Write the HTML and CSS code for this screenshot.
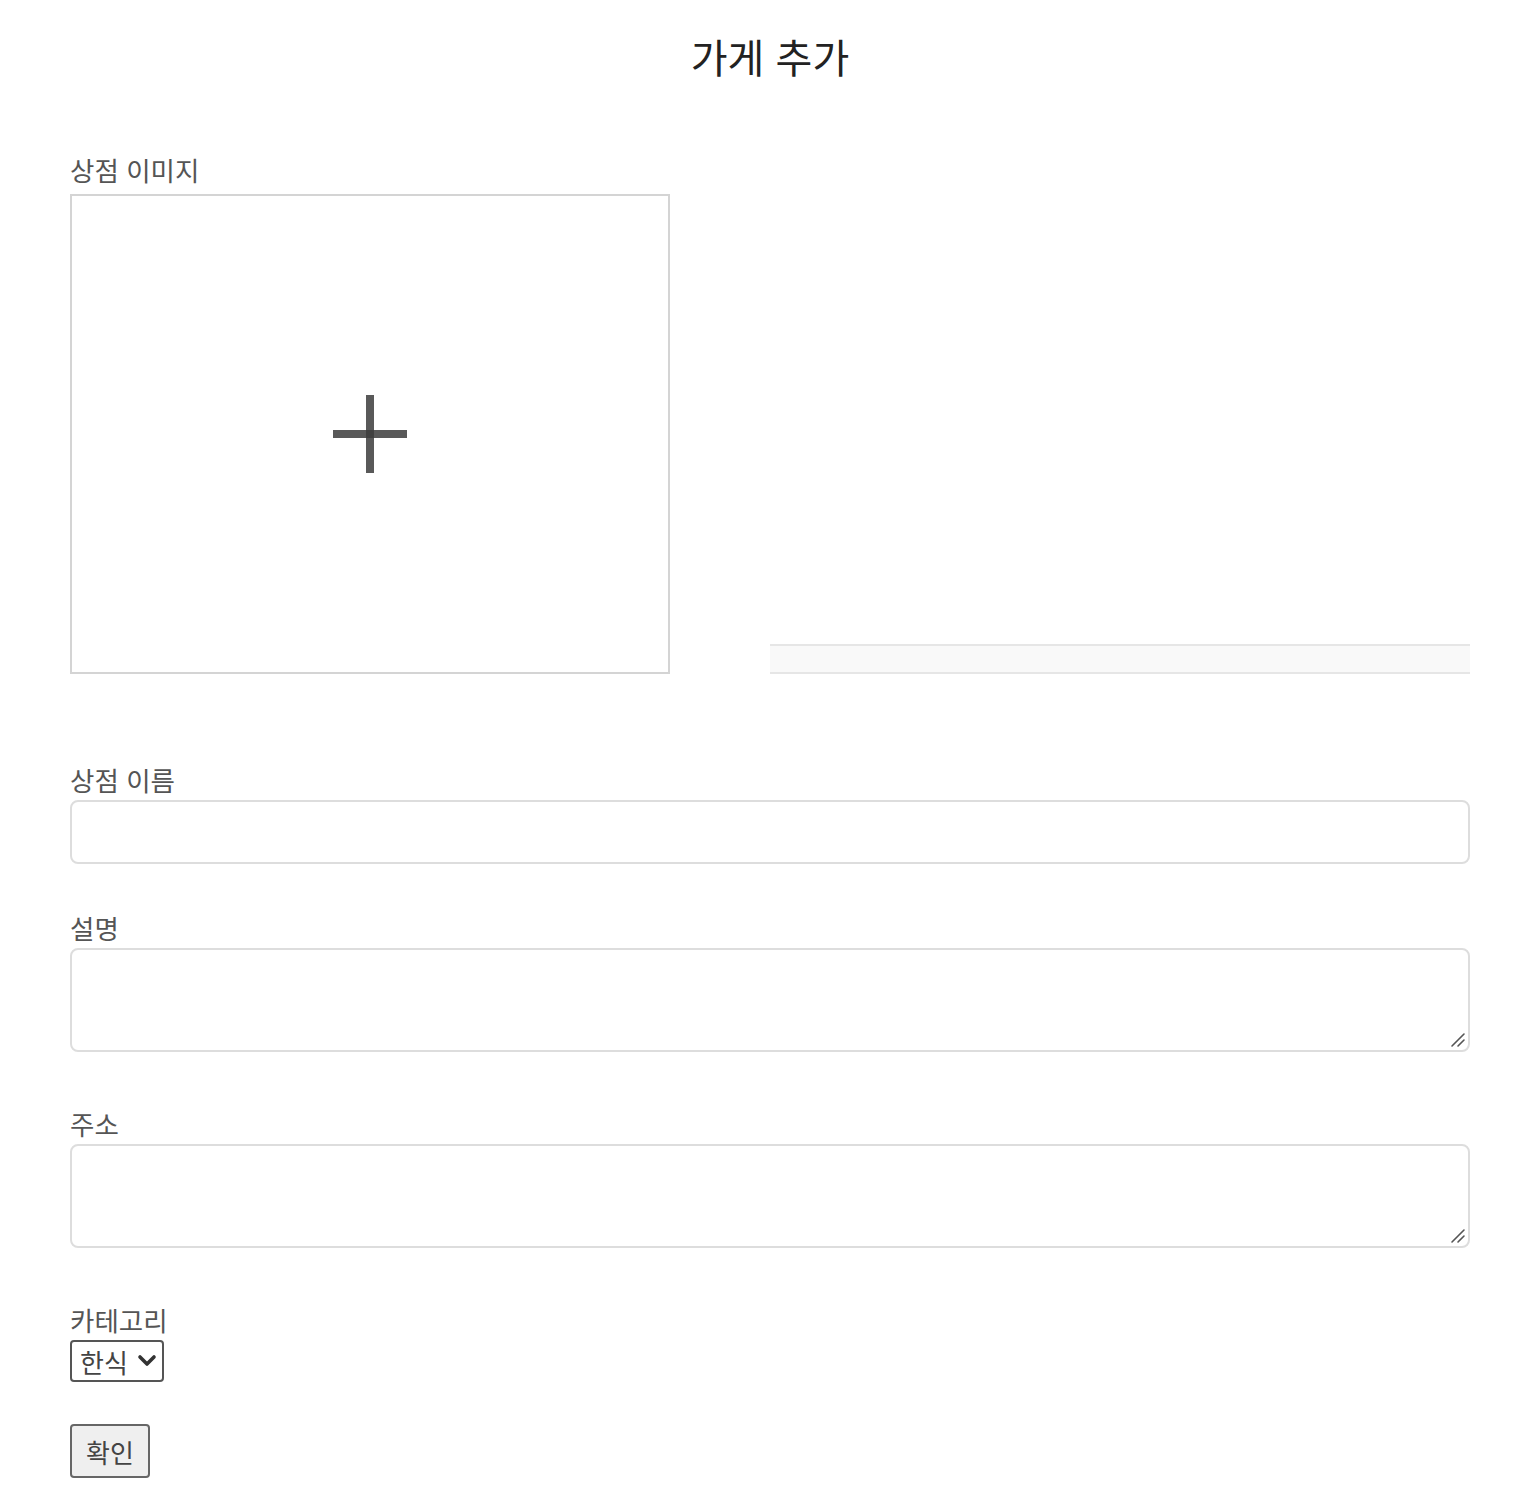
FILE: index.html
```html
<!DOCTYPE html>
<html lang="ko">
<head>
<meta charset="utf-8">
<link rel="stylesheet" href="styles.css">
</head>
<body>
<div class="page">
  <h1 class="title">가게 추가</h1>
  <form class="form">
    <div class="field field-image">
      <label class="label">상점 이미지</label>
      <div class="image-row">
        <div class="image-box">
          <span class="plus-h"></span>
          <span class="plus-v"></span>
        </div>
        <div class="image-side">
          <div class="image-list"></div>
        </div>
      </div>
    </div>
    <div class="field field-name">
      <label class="label">상점 이름</label>
      <input class="input" type="text">
    </div>
    <div class="field field-desc">
      <label class="label">설명</label>
      <div class="textarea-wrap">
        <textarea class="textarea"></textarea>
        <svg class="grip" width="16" height="16" viewBox="0 0 16 16"><path d="M2 14 L14 2 M8 14 L14 8" fill="none" stroke="#555" stroke-width="1.6" stroke-linecap="round"/></svg>
      </div>
    </div>
    <div class="field field-addr">
      <label class="label">주소</label>
      <div class="textarea-wrap">
        <textarea class="textarea"></textarea>
        <svg class="grip" width="16" height="16" viewBox="0 0 16 16"><path d="M2 14 L14 2 M8 14 L14 8" fill="none" stroke="#555" stroke-width="1.6" stroke-linecap="round"/></svg>
      </div>
    </div>
    <div class="field field-cat">
      <label class="label">카테고리</label>
      <div class="select-wrap">
        <select class="select"><option>한식</option></select>
        <svg class="chevron" width="20" height="14" viewBox="0 0 20 14"><path d="M3 3 L10 10 L17 3" fill="none" stroke="#333" stroke-width="3.6" stroke-linecap="round" stroke-linejoin="round"/></svg>
      </div>
    </div>
    <button class="submit" type="button">확인</button>
  </form>
</div>
</body>
</html>
```

FILE: styles.css
```css
html, body {
  margin: 0;
  padding: 0;
  background: #fff;
}
body {
  font-family: "Noto Sans CJK KR", "Noto Sans", sans-serif;
  color: #555;
}
.page {
  width: 1400px;
  margin-left: 70px;
}
.title {
  margin: 28px 0 0;
  font-size: 40px;
  line-height: 56px;
  font-weight: 400;
  color: #222;
  text-align: center;
}
.form {
  display: flex;
  flex-direction: column;
}
.label {
  display: block;
  font-size: 26.5px;
  line-height: 32px;
  margin-bottom: 4px;
  color: #555;
}
.field-image {
  margin-top: 70px;
}
.image-row {
  display: flex;
  gap: 100px;
  margin-top: 8px;
}
.image-box {
  position: relative;
  width: 600px;
  height: 480px;
  box-sizing: border-box;
  border: 2px solid #d4d4d4;
}
.plus-h, .plus-v {
  position: absolute;
  background: rgba(60, 60, 60, 0.85);
}
.plus-h {
  left: 261px;
  top: 234px;
  width: 74px;
  height: 8px;
}
.plus-v {
  left: 294px;
  top: 199px;
  width: 8px;
  height: 78px;
}
.image-side {
  flex: 1;
  display: flex;
  align-items: flex-end;
}
.image-list {
  width: 100%;
  height: 30px;
  box-sizing: border-box;
  background: #f9f9f9;
  border-top: 2px solid #e6e6e6;
  border-bottom: 2px solid #e6e6e6;
}
.field-name {
  margin-top: 90px;
}
.input, .textarea {
  display: block;
  width: 100%;
  box-sizing: border-box;
  border: 2px solid #ddd;
  border-radius: 8px;
  background: #fff;
  font-family: inherit;
  font-size: 26px;
  margin: 0;
}
.input {
  height: 64px;
}
.textarea-wrap {
  position: relative;
}
.textarea {
  height: 104px;
  resize: none;
}
.grip {
  position: absolute;
  right: 4px;
  bottom: 4px;
  pointer-events: none;
}
.field-desc {
  margin-top: 48px;
}
.field-addr {
  margin-top: 56px;
}
.field-cat {
  margin-top: 56px;
}
.select-wrap {
  position: relative;
  width: 94px;
  height: 42px;
}
.select {
  display: block;
  appearance: none;
  -webkit-appearance: none;
  height: 42px;
  width: 94px;
  font-family: inherit;
  font-size: 26px;
  color: #444;
  border: 2px solid #555;
  border-radius: 4px;
  background: #fff;
  padding: 0 0 0 8px;
  margin: 0;
}
.chevron {
  position: absolute;
  right: 7px;
  top: 14px;
  pointer-events: none;
}
.submit {
  align-self: flex-start;
  margin-top: 42px;
  width: 80px;
  height: 54px;
  font-family: inherit;
  font-size: 26px;
  color: #444;
  background: #efefef;
  border: 2px solid #666;
  border-radius: 4px;
  padding: 0;
}
```
